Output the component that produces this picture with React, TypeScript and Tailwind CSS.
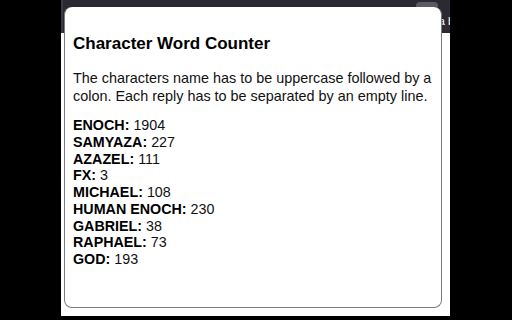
import React from 'react';

const counts: [string, number][] = [
  ['ENOCH', 1904],
  ['SAMYAZA', 227],
  ['AZAZEL', 111],
  ['FX', 3],
  ['MICHAEL', 108],
  ['HUMAN ENOCH', 230],
  ['GABRIEL', 38],
  ['RAPHAEL', 73],
  ['GOD', 193],
];

export default function App() {
  return (
    <div
      className="w-[512px] h-[320px] bg-black overflow-hidden"
      style={{ fontFamily: '"Liberation Sans", Arial, sans-serif' }}
    >
      <div className="relative ml-[61px] w-[389px] h-[316px] bg-white overflow-hidden">
        {/* page behind the popup */}
        <div className="flex h-[33px] items-end justify-end pb-[5px] bg-[#2b2a33] border-l-2 border-[#3a3a40]">
          <span className="text-[11px] leading-[13px] text-white whitespace-nowrap -mr-[4px]">a b</span>
        </div>
        <div className="absolute left-[355px] top-[2px] w-[22px] h-[5px] bg-[#5b5b66] rounded-t-sm" />

        {/* extension popup */}
        <div className="absolute left-[3px] top-[7px] w-[378px] h-[301px] flex flex-col bg-white rounded-lg border border-[#7b7b86] border-t-0 pl-[8px] pr-[4px] pt-[27px] text-[#111]">
          <h1 className="text-[17px] leading-[20px] font-bold text-black">Character Word Counter</h1>
          <p className="mt-[15px] text-[14.4px] leading-[18px]">
            The characters name has to be uppercase followed by a colon. Each reply has to be separated by an empty line.
          </p>
          <div className="mt-[12px] flex flex-col text-[14.3px] leading-[16.75px]">
            {counts.map(([name, n]) => (
              <div key={name}>
                <b className="text-black">{name}:</b> {n}
              </div>
            ))}
          </div>
        </div>
      </div>
    </div>
  );
}
